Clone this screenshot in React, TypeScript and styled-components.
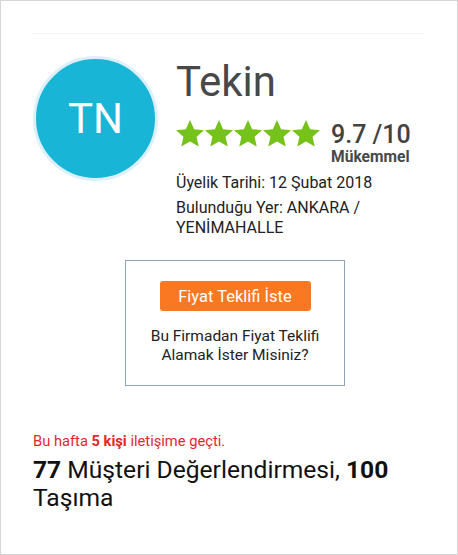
import styled, { createGlobalStyle } from "styled-components";

const GlobalStyle = createGlobalStyle`
  html, body {
    margin: 0;
    padding: 0;
    background: #ffffff;
  }
  body {
    font-family: Roboto, "Liberation Sans", Arial, sans-serif;
  }
  * {
    box-sizing: border-box;
  }
`;

const Star = () => (
  <svg width="28" height="27" viewBox="1.1 1.2 21.8 21">
    <path
      d="M12 1.2l3.2 7.1 7.7.8-5.8 5.2 1.7 7.6L12 17.9l-6.8 4 1.7-7.6L1.1 9.1l7.7-.8z"
      fill="#74c21a"
    />
  </svg>
);

const App = () => {
  return (
    <>
      <GlobalStyle />
      <Card className="firm-card">
        <Divider />
        <Header>
          <Avatar>TN</Avatar>
          <Info>
            <Name>Tekin</Name>
            <RatingRow>
              <Stars>
                {[0, 1, 2, 3, 4].map((i) => (
                  <Star key={i} />
                ))}
              </Stars>
              <Score>
                <ScoreValue>9.7 /10</ScoreValue>
                <ScoreLabel>Mükemmel</ScoreLabel>
              </Score>
            </RatingRow>
            <Detail>Üyelik Tarihi: 12 Şubat 2018</Detail>
            <Detail $gap={5}>Bulunduğu Yer: ANKARA / YENİMAHALLE</Detail>
          </Info>
        </Header>
        <QuoteBox>
          <QuoteButton type="button">Fiyat Teklifi İste</QuoteButton>
          <QuoteText>
            Bu Firmadan Fiyat Teklifi
            <br />
            Alamak İster Misiniz?
          </QuoteText>
        </QuoteBox>
        <Notice>
          Bu hafta <b>5 kişi</b> iletişime geçti.
        </Notice>
        <Stats>
          <b>77</b> Müşteri Değerlendirmesi, <b>100</b> Taşıma
        </Stats>
      </Card>
    </>
  );
};

const Card = styled.main`
  width: 458px;
  height: 555px;
  border: 1px solid #d6d6d6;
  padding: 32px 32px 0;
  display: flex;
  flex-direction: column;
`;

const Divider = styled.div`
  height: 1px;
  background: #f4f4f4;
`;

const Header = styled.section`
  display: flex;
  align-items: flex-start;
  gap: 18px;
  margin-top: 22px;
`;

const Avatar = styled.div`
  flex: 0 0 125px;
  width: 125px;
  height: 125px;
  border-radius: 50%;
  background: #19b5d6;
  border: 3px solid #dcf0fb;
  color: #ffffff;
  font-size: 42px;
  display: flex;
  align-items: center;
  justify-content: center;
`;

const Info = styled.div`
  flex: 1;
  display: flex;
  flex-direction: column;
  padding-top: 1px;
`;

const Name = styled.h1`
  margin: 0;
  font-size: 42px;
  line-height: 50px;
  font-weight: 400;
  color: #484848;
`;

const RatingRow = styled.div`
  display: flex;
  align-items: flex-start;
  gap: 11px;
  margin-top: 13px;
`;

const Stars = styled.div`
  display: flex;
  gap: 1px;
`;

const Score = styled.div`
  display: flex;
  flex-direction: column;
  padding-top: 2px;
`;

const ScoreValue = styled.span`
  font-size: 25px;
  line-height: 25px;
  font-weight: 500;
  color: #424242;
`;

const ScoreLabel = styled.span`
  margin-top: 3px;
  font-size: 15.6px;
  line-height: 15px;
  font-weight: 700;
  color: #484848;
`;

const Detail = styled.p<{ $gap?: number }>`
  margin: ${(p) => p.$gap ?? 8}px 0 0;
  font-size: 16px;
  line-height: 20px;
  color: #222222;
`;

const QuoteBox = styled.section`
  width: 220px;
  margin: 22px 0 0 92px;
  border: 1px solid #8ea6b6;
  padding: 20px 0 20px;
  display: flex;
  flex-direction: column;
  align-items: center;
`;

const QuoteButton = styled.button`
  width: 151px;
  height: 30px;
  border: none;
  border-radius: 3px;
  background: #fb7822;
  color: #ffffff;
  font-family: inherit;
  font-size: 16.5px;
  padding: 0;
  cursor: pointer;
`;

const QuoteText = styled.p`
  margin: 16px 0 0;
  font-size: 15.5px;
  line-height: 19px;
  text-align: center;
  color: #222222;
`;

const Notice = styled.p`
  margin: 46px 0 0;
  font-size: 14.7px;
  line-height: 18px;
  color: #e3262b;
  b {
    font-weight: 700;
  }
`;

const Stats = styled.p`
  margin: 6px 0 0;
  font-size: 24.6px;
  line-height: 28px;
  color: #111111;
  b {
    font-weight: 700;
  }
`;

export default App;
